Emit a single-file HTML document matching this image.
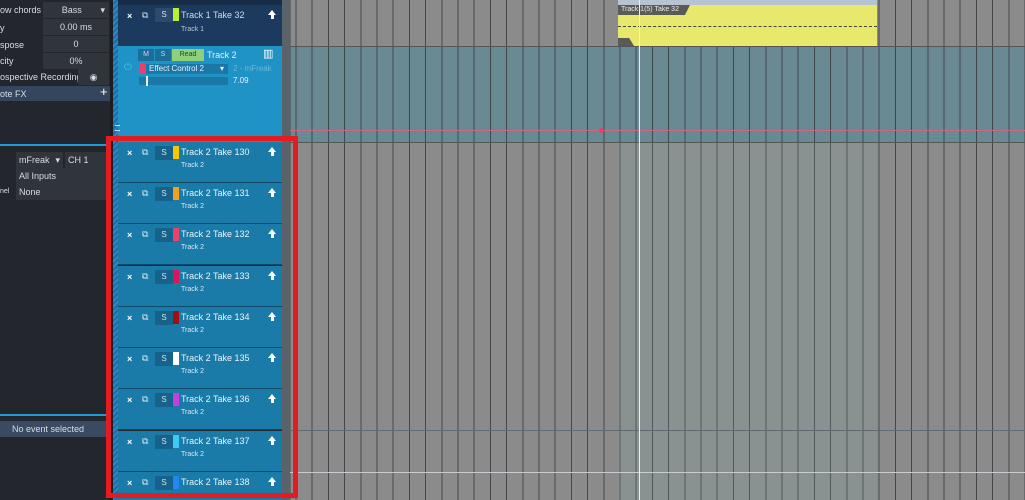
<!DOCTYPE html><html style="width:1025px;height:500px;overflow:hidden"><head><style>
*{margin:0;padding:0;box-sizing:border-box}
body{width:1025px;height:500px;overflow:hidden;background:#23262d;font-family:"Liberation Sans","DejaVu Sans",sans-serif;position:relative}
.a{position:absolute}
.lbl{color:#d8dde3;font-size:9px;white-space:nowrap}
.val{background:#30343b;color:#d8dde3;font-size:9px;text-align:center;line-height:16px}
.grid{background-image:repeating-linear-gradient(90deg,rgba(50,55,60,.8) 0,rgba(50,55,60,.8) 1px,transparent 1px,transparent 16.2px);background-position:5.5px 0}
.take{position:absolute;left:118px;width:164px;height:41px;background:#1b7ba8;border-bottom:1px solid #0f4a68;overflow:hidden}
.take .x{position:absolute;left:9px;top:6px;color:#fff;font-size:9px;font-weight:bold}
.take .c{position:absolute;left:24px;top:5px;color:#d8e8f0;font-size:9px}
.take .s{position:absolute;left:37px;top:4px;width:18px;height:14px;background:#17628a;color:#cfe2ee;font-size:8px;text-align:center;line-height:14px}
.take .col{position:absolute;left:55px;top:4px;width:6px;height:13px}
.take .t{position:absolute;left:63px;top:5px;color:#eaf4fa;font-size:9px}
.take .t2{position:absolute;left:63px;top:20px;color:#d9ebf5;font-size:7px}
.take .up{position:absolute;left:150px;top:5px;width:0;height:0;border-left:4px solid transparent;border-right:4px solid transparent;border-bottom:5px solid #fff}
.take .up:after{content:"";position:absolute;left:-1.5px;top:5px;width:3px;height:4px;background:#fff}
</style></head><body>
<div class="a lbl" style="left:0;top:5px">ow chords</div><div class="a val" style="left:43px;top:2px;width:66px">Bass <span style="float:right;margin-right:4px">▾</span></div>
<div class="a lbl" style="left:0;top:23px">y</div><div class="a val" style="left:43px;top:19px;width:66px">0.00 ms</div>
<div class="a lbl" style="left:0;top:40px">spose</div><div class="a val" style="left:43px;top:36px;width:66px">0</div>
<div class="a lbl" style="left:0;top:56px">city</div><div class="a val" style="left:43px;top:53px;width:66px">0%</div>
<div class="a lbl" style="left:0;top:72px">ospective Recording</div><div class="a val" style="left:78px;top:69px;width:31px">◉</div>
<div class="a" style="left:0;top:86px;width:110px;height:15px;background:#34465e"></div>
<div class="a lbl" style="left:0;top:89px">ote FX</div><div class="a" style="left:100px;top:84px;color:#fff;font-size:13px">+</div>
<div class="a" style="left:0;top:144px;width:110px;height:2px;background:#1f9bd0"></div>
<div class="a val" style="left:16px;top:152px;width:47px;text-align:left;padding-left:3px">mFreak <span style="float:right;margin-right:3px">▾</span></div>
<div class="a val" style="left:65px;top:152px;width:44px;text-align:left;padding-left:3px">CH 1</div>
<div class="a val" style="left:16px;top:168px;width:93px;text-align:left;padding-left:3px">All Inputs</div>
<div class="a lbl" style="left:0;top:188px;font-size:7px">nel</div>
<div class="a val" style="left:16px;top:184px;width:93px;text-align:left;padding-left:3px">None</div>
<div class="a" style="left:0;top:414px;width:110px;height:2px;background:#1f9bd0"></div>
<div class="a" style="left:0;top:421px;width:110px;height:16px;background:#3a4a62;color:#d8dde3;font-size:9px;line-height:16px;padding-left:12px">No event selected</div>
<div class="a" style="left:110px;top:0;width:8px;height:500px;background:#1a1d22"></div>
<div class="a" style="left:113px;top:0;width:5px;height:500px;background:repeating-linear-gradient(135deg,#2f86c4 0 2px,#1f6aa4 2px 4px)"></div>
<div class="a" style="left:118px;top:0;width:164px;height:46px;background:#1b3a5e;border-top:5px solid #172c46"></div>
<div class="a" style="left:127px;top:11px;color:#fff;font-size:9px;font-weight:bold">×</div>
<div class="a" style="left:142px;top:10px;color:#cfe2ee;font-size:9px">⧉</div>
<div class="a" style="left:155px;top:8px;width:18px;height:14px;background:#2b4a6c;color:#cfe2ee;font-size:8px;text-align:center;line-height:14px">S</div>
<div class="a" style="left:173px;top:8px;width:6px;height:13px;background:#b8f030"></div>
<div class="a" style="left:181px;top:10px;color:#d0dbe6;font-size:9px">Track 1 Take 32</div>
<div class="a" style="left:181px;top:26px;color:#b8c8d8;font-size:7px">Track 1</div>
<div class="a" style="left:268px;top:10px;width:0;height:0;border-left:4px solid transparent;border-right:4px solid transparent;border-bottom:5px solid #fff"></div>
<div class="a" style="left:270.5px;top:15px;width:3px;height:4px;background:#fff"></div>
<div class="a" style="left:118px;top:46px;width:164px;height:96px;background:#1f92c6"></div>
<div class="a" style="left:138px;top:49px;width:16px;height:12px;background:#1a6e98;color:#dce;font-size:7px;text-align:center;line-height:12px">M</div>
<div class="a" style="left:155px;top:49px;width:16px;height:12px;background:#1a6e98;color:#dce;font-size:7px;text-align:center;line-height:12px">S</div>
<div class="a" style="left:172px;top:49px;width:32px;height:12px;background:#8fd07a;color:#244;font-size:7px;text-align:center;line-height:12px">Read</div>
<div class="a" style="left:207px;top:50px;color:#eef;font-size:9px">Track 2</div>
<div class="a" style="left:263px;top:47px;color:#fff;font-size:11px">▥</div>
<div class="a" style="left:124px;top:62px;color:#4ac0f0;font-size:10px">⏻</div>
<div class="a" style="left:139px;top:64px;width:7px;height:10px;background:#e8406a"></div>
<div class="a" style="left:146px;top:64px;width:82px;height:10px;background:#1a77a6;color:#eef;font-size:8px;line-height:10px;padding-left:3px">Effect Control 2 <span style="float:right;margin-right:4px">▾</span></div>
<div class="a" style="left:233px;top:64px;color:#6cb8dc;font-size:8px">2 - mFreak</div>
<div class="a" style="left:139px;top:77px;width:89px;height:8px;background:#1a77a6"></div>
<div class="a" style="left:146px;top:76px;width:2px;height:10px;background:#e8f0f8"></div>
<div class="a" style="left:233px;top:76px;color:#eef;font-size:8px">7.09</div>
<div class="a" style="left:115px;top:125px;width:5px;height:6px;border-top:1px solid #cde;border-bottom:1px solid #cde"></div>
<div class="a" style="left:282px;top:0;width:8px;height:500px;background:#5a626a"></div>
<div class="a grid" style="left:290px;top:0;width:735px;height:500px;background-color:#8b8b8b"></div>
<div class="a grid" style="left:290px;top:46px;width:735px;height:96px;background-color:#6a8a93"></div>
<div class="a" style="left:618px;top:142px;width:259px;height:358px;background:rgba(130,175,170,.18)"></div>
<div class="a" style="left:290px;top:46px;width:735px;height:1px;background:#555"></div>
<div class="a" style="left:290px;top:142px;width:735px;height:1px;background:#555"></div>
<div class="a" style="left:290px;top:130px;width:735px;height:1px;background:#c86a80"></div>
<div class="a" style="left:599px;top:128px;width:5px;height:5px;border-radius:50%;background:#e84070"></div>
<div class="a" style="left:290px;top:430px;width:735px;height:1px;background:#5f6a70"></div>
<div class="a" style="left:290px;top:472px;width:735px;height:1px;background:#c8ccd0"></div>
<div class="a" style="left:618px;top:0;width:259px;height:5px;background:#b6c4d2"></div>
<div class="a" style="left:618px;top:5px;width:259px;height:41px;background:#e8e86c"></div>
<div class="a" style="left:618px;top:5px;width:72px;height:10px;background:#5a5a58;clip-path:polygon(0 0,100% 0,93% 100%,0 100%)"></div>
<div class="a" style="left:621px;top:6px;color:#eee;font-size:7px;white-space:nowrap">Track 1(5) Take 32</div>
<div class="a" style="left:618px;top:26px;width:259px;height:1px;border-top:1px dashed #444"></div>
<div class="a" style="left:618px;top:38px;width:16px;height:8px;background:#5a5a58;clip-path:polygon(0 0,70% 0,100% 100%,0 100%)"></div>
<div class="a" style="left:639px;top:0;width:1px;height:500px;background:#e8eef4"></div>
<div class="take" style="top:142px"><span class="x">×</span><span class="c">⧉</span><span class="s">S</span><span class="col" style="background:#f5c800"></span><span class="t">Track 2 Take 130</span><span class="t2">Track 2</span><span class="up"></span></div>
<div class="take" style="top:183px"><span class="x">×</span><span class="c">⧉</span><span class="s">S</span><span class="col" style="background:#f0a020"></span><span class="t">Track 2 Take 131</span><span class="t2">Track 2</span><span class="up"></span></div>
<div class="take" style="top:224px"><span class="x">×</span><span class="c">⧉</span><span class="s">S</span><span class="col" style="background:#e8446a"></span><span class="t">Track 2 Take 132</span><span class="t2">Track 2</span><span class="up"></span></div>
<div class="take" style="top:266px"><span class="x">×</span><span class="c">⧉</span><span class="s">S</span><span class="col" style="background:#d8185a"></span><span class="t">Track 2 Take 133</span><span class="t2">Track 2</span><span class="up"></span></div>
<div class="take" style="top:307px"><span class="x">×</span><span class="c">⧉</span><span class="s">S</span><span class="col" style="background:#a01010"></span><span class="t">Track 2 Take 134</span><span class="t2">Track 2</span><span class="up"></span></div>
<div class="take" style="top:348px"><span class="x">×</span><span class="c">⧉</span><span class="s">S</span><span class="col" style="background:#ffffff"></span><span class="t">Track 2 Take 135</span><span class="t2">Track 2</span><span class="up"></span></div>
<div class="take" style="top:389px"><span class="x">×</span><span class="c">⧉</span><span class="s">S</span><span class="col" style="background:#c040e0"></span><span class="t">Track 2 Take 136</span><span class="t2">Track 2</span><span class="up"></span></div>
<div class="take" style="top:431px"><span class="x">×</span><span class="c">⧉</span><span class="s">S</span><span class="col" style="background:#40c8f4"></span><span class="t">Track 2 Take 137</span><span class="t2">Track 2</span><span class="up"></span></div>
<div class="take" style="top:472px;height:28px;border-bottom:none"><span class="x">×</span><span class="c">⧉</span><span class="s">S</span><span class="col" style="background:#2088f0"></span><span class="t">Track 2 Take 138</span><span class="up"></span></div>
<div class="a" style="left:106px;top:136px;width:192px;height:362px;border:5px solid #e21c22"></div>
</body></html>
